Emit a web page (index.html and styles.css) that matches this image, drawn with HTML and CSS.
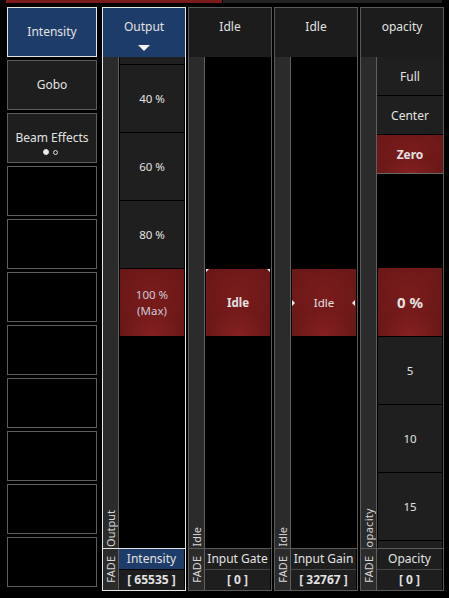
FILE: index.html
```html
<!DOCTYPE html>
<html lang="en">
<head>
  <meta charset="UTF-8">
  <title>Fader Sheet</title>
  <link rel="stylesheet" href="styles.css">
</head>
<body>
  <div class="topbar">
    <div class="topbar-fill"></div>
    <div class="topbar-rest"></div>
  </div>

  <div class="panel">
    <div class="tabs">
      <div class="tab selected">Intensity</div>
      <div class="tab">Gobo</div>
      <div class="tab">
        Beam Effects
        <span class="pager"><i class="dot on"></i><i class="dot"></i></span>
      </div>
      <div class="tab empty"></div>
      <div class="tab empty"></div>
      <div class="tab empty"></div>
      <div class="tab empty"></div>
      <div class="tab empty"></div>
      <div class="tab empty"></div>
      <div class="tab empty"></div>
      <div class="tab empty"></div>
    </div>

    <!-- Output / Intensity -->
    <div class="fader active">
      <div class="fader-head">Output<span class="arrow"></span></div>
      <div class="fader-body">
        <div class="strip"><span class="vlabel">Output</span></div>
        <div class="track">
          <div class="cell stub"></div>
          <div class="cell">40 %</div>
          <div class="cell">60 %</div>
          <div class="cell">80 %</div>
          <div class="cell hot dim">100 %<br>(Max)</div>
        </div>
      </div>
      <div class="fader-foot">
        <div class="strip"><span class="vlabel">FADE</span></div>
        <div class="readout">
          <div class="readout-name">Intensity</div>
          <div class="readout-value">[ 65535 ]</div>
        </div>
      </div>
    </div>

    <!-- Input Gate -->
    <div class="fader">
      <div class="fader-head">Idle</div>
      <div class="fader-body">
        <div class="strip"><span class="vlabel">Idle</span></div>
        <div class="track">
          <div class="spacer"></div>
          <div class="cell hot bold corners">Idle</div>
        </div>
      </div>
      <div class="fader-foot">
        <div class="strip"><span class="vlabel">FADE</span></div>
        <div class="readout">
          <div class="readout-name">Input Gate</div>
          <div class="readout-value">[ 0 ]</div>
        </div>
      </div>
    </div>

    <!-- Input Gain -->
    <div class="fader">
      <div class="fader-head">Idle</div>
      <div class="fader-body">
        <div class="strip"><span class="vlabel">Idle</span></div>
        <div class="track">
          <div class="spacer"></div>
          <div class="cell hot pointers">Idle</div>
        </div>
      </div>
      <div class="fader-foot">
        <div class="strip"><span class="vlabel">FADE</span></div>
        <div class="readout">
          <div class="readout-name">Input Gain</div>
          <div class="readout-value">[ 32767 ]</div>
        </div>
      </div>
    </div>

    <!-- Opacity -->
    <div class="fader">
      <div class="fader-head">opacity</div>
      <div class="fader-body">
        <div class="strip"><span class="vlabel spaced">opacity</span></div>
        <div class="track">
          <div class="preset">Full</div>
          <div class="preset">Center</div>
          <div class="preset hot bold">Zero</div>
          <div class="spacer short"></div>
          <div class="cell hot big">0 %</div>
          <div class="cell">5</div>
          <div class="cell">10</div>
          <div class="cell">15</div>
          <div class="cell stub"></div>
        </div>
      </div>
      <div class="fader-foot">
        <div class="strip"><span class="vlabel">FADE</span></div>
        <div class="readout">
          <div class="readout-name">Opacity</div>
          <div class="readout-value">[ 0 ]</div>
        </div>
      </div>
    </div>
  </div>
</body>
</html>
```

FILE: styles.css
```css
body {
  margin: 0;
  background: #000;
  color: #e2e2e2;
  font-family: 'Noto Sans', 'Open Sans', sans-serif;
  font-size: 11.5px;
}

.topbar {
  display: flex;
  gap: 1px;
  height: 3px;
  margin: 0 7px 0 6px;
}

.topbar-fill {
  width: 216px;
  background: #7a1a1a;
}

.topbar-rest {
  flex: 1;
  background: #222;
}

.panel {
  display: flex;
  gap: 2px;
  margin-top: 4px;
  padding-left: 7px;
}

/* left side tabs */
.tabs {
  width: 90px;
  margin-right: 3px;
  display: flex;
  flex-direction: column;
  gap: 3px;
}

.tab {
  position: relative;
  box-sizing: border-box;
  height: 50px;
  border: 1px solid #5c5c5c;
  background: #1e1e1e;
  display: flex;
  align-items: center;
  justify-content: center;
  font-size: 12px;
  padding-bottom: 1px;
}

.tab.selected {
  background: #1e3c69;
  border-color: #e4e4e4;
}

.tab.empty {
  background: #000;
  border-color: #5e5e5e;
}

.pager {
  position: absolute;
  left: 35px;
  top: 35px;
  display: flex;
  align-items: center;
  gap: 4px;
}

.dot {
  box-sizing: border-box;
  width: 5px;
  height: 5px;
  border-radius: 50%;
  border: 1px solid #ddd;
}

.dot.on {
  width: 6px;
  height: 6px;
  background: #eee;
}

/* fader columns */
.fader {
  box-sizing: border-box;
  width: 84px;
  height: 584px;
  border: 1px solid #5a5a5a;
  display: flex;
  flex-direction: column;
}

.fader.active {
  border-color: #e6e6e6;
}

.fader-head {
  height: 49px;
  flex: none;
  background: #1c1c1c;
  display: flex;
  flex-direction: column;
  align-items: center;
  padding-top: 10px;
  box-sizing: border-box;
  line-height: 17px;
  font-size: 12px;
}

.active .fader-head {
  background: #1e3c69;
}

.arrow {
  margin-top: 10px;
  border-left: 6px solid transparent;
  border-right: 6px solid transparent;
  border-top: 6px solid #f2f2f2;
}

.fader-body {
  flex: 1;
  display: flex;
  min-height: 0;
}

.strip {
  width: 15px;
  flex: none;
  background: #2b2b2b;
  border-right: 1px solid #5f5f5f;
  display: flex;
  flex-direction: column;
  justify-content: flex-end;
  align-items: center;
  padding-bottom: 1px;
}

.vlabel {
  writing-mode: vertical-rl;
  transform: rotate(180deg);
  font-size: 11px;
  line-height: 13px;
  color: #d6d6d6;
}

.vlabel.spaced {
  letter-spacing: 0.3px;
}

.track {
  flex: 1;
  display: flex;
  flex-direction: column;
  overflow: hidden;
}

.cell {
  height: 67px;
  flex: none;
  margin: 0 1px 1px;
  background: #1f1f1f;
  display: flex;
  align-items: center;
  justify-content: center;
  text-align: center;
  line-height: 16px;
}

.cell.stub {
  height: 7px;
}

.preset {
  height: 38px;
  flex: none;
  margin-bottom: 1px;
  background: #1f1f1f;
  display: flex;
  align-items: center;
  justify-content: center;
  font-size: 12px;
}

.preset.hot {
  margin-bottom: 0;
  border-bottom: 1px solid #6a6a6a;
}

.spacer {
  height: 211px;
  flex: none;
  margin-bottom: 1px;
}

.spacer.short {
  height: 94px;
  margin-bottom: 0;
}

.hot {
  position: relative;
  background: radial-gradient(ellipse 50% 40% at 50% 100%, rgba(140, 34, 34, 0.8), rgba(140, 34, 34, 0)),
    radial-gradient(ellipse 80% 80% at 50% 40%, #7a1b1b, #661717);
}

.cell.big {
  height: 68px;
  font-size: 15px;
  font-weight: bold;
}

.dim {
  color: #c9cad6;
}

.bold {
  font-weight: bold;
}

/* little markers on the live level */
.corners::before,
.corners::after {
  content: "";
  position: absolute;
  top: 0;
  border-top: 3px solid #f0f0f0;
}

.corners::before {
  left: 0;
  border-right: 3px solid transparent;
}

.corners::after {
  right: 0;
  border-left: 3px solid transparent;
}

.pointers::before,
.pointers::after {
  content: "";
  position: absolute;
  top: 31px;
  border-top: 3px solid transparent;
  border-bottom: 3px solid transparent;
}

.pointers::before {
  left: 0;
  border-left: 3px solid #f0f0f0;
}

.pointers::after {
  right: 1px;
  border-right: 3px solid #f0f0f0;
}

/* bottom readout */
.fader-foot {
  height: 41px;
  flex: none;
  display: flex;
  border-top: 1px solid #5a5a5a;
}

.active .fader-foot {
  border-top-color: #e6e6e6;
}

.fader-foot .strip {
  justify-content: center;
  padding-bottom: 0;
}

.readout {
  flex: 1;
  display: flex;
  flex-direction: column;
  padding-right: 1px;
}

.readout-name {
  height: 20px;
  line-height: 20px;
  text-align: center;
  background: #1e1e1e;
  font-size: 12px;
}

.active .readout-name {
  background: #1e3c69;
}

.readout-value {
  height: 20px;
  line-height: 20px;
  text-align: center;
  background: #1e1e1e;
  border-top: 1px solid #454545;
  font-weight: bold;
  font-size: 12px;
}

.active .readout-value {
  border-top-color: #000;
}
```
